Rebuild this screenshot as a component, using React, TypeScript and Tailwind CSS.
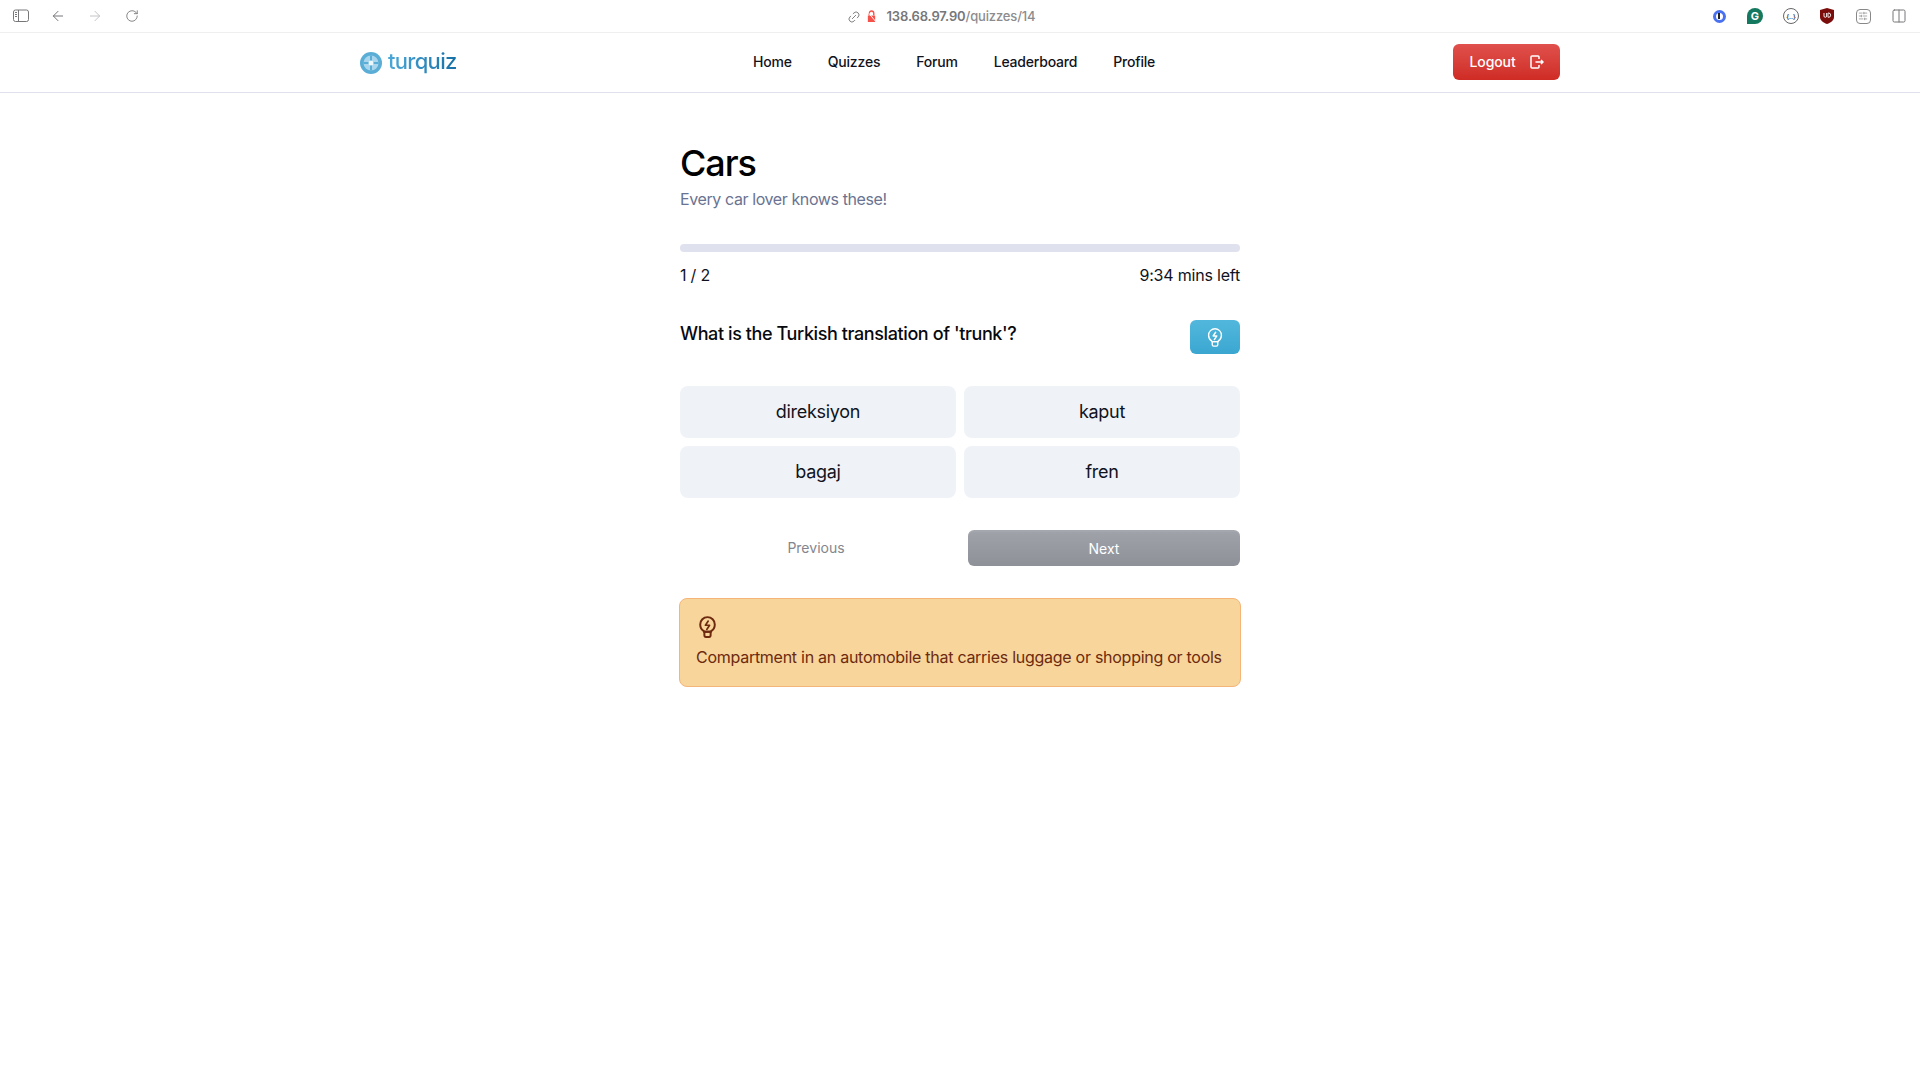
import { ArrowLeft, ArrowRight, Columns2, Link2, RotateCw, SlidersHorizontal } from "lucide-react";

function BulbIcon({ className }: { className: string }) {
  return (
    <svg viewBox="0 0 24 24" fill="none" stroke="currentColor" strokeLinecap="round" strokeLinejoin="round" className={className}>
      <path d="M8.500 16.500C6.400 15.100 5 12.800 5 10a7 7 0 0 1 14 0c0 2.800-1.400 5.100-3.500 6.500V17H8.500z" />
      <path d="M9 20.500c0 1 .6 1.500 1.500 1.500h3c.9 0 1.500-.5 1.500-1.500V17H9z" />
      <path d="M12.700 6.800 10 10.800h4l-2.700 4" strokeWidth="1.600" />
    </svg>
  );
}

function Logo() {
  return (
    <svg viewBox="0 0 22 22" className="w-[22px] h-[22px]">
      <circle cx="11" cy="11" r="11" fill="#5aaed6" />
      <circle cx="11" cy="11" r="7.500" fill="#a9d6ec" />
      <path d="M3.500 11h15M11 3.500v15" stroke="#5aaed6" strokeWidth="2" />
      <circle cx="11" cy="11" r="2.500" fill="#eef7fb" />
    </svg>
  );
}

function BrowserBar() {
  return (
    <div className="h-[33px] border-b border-[#efeff2] flex items-center text-[#77777a]">
      <div className="flex items-center pl-[13px]">
        <svg viewBox="0 0 16 14" fill="none" stroke="currentColor" strokeWidth="1" className="w-[16px] h-[14px]">
          <rect x="0.500" y="1" width="15" height="11.500" rx="2" />
          <path d="M5.500 1v11.500M2 3.500h2M2 5.500h2M2 7.500h2" />
        </svg>
        <ArrowLeft className="w-[16px] h-[16px] ml-[21px]" strokeWidth={1.5} />
        <ArrowRight className="w-[16px] h-[16px] ml-[21px] text-[#c4c4c7]" strokeWidth={1.5} />
        <RotateCw className="w-[14px] h-[14px] ml-[22px]" strokeWidth={1.5} />
      </div>
      <div className="flex-1 flex items-center justify-center pl-[42px] text-[13px] tracking-[-0.15px] font-medium pt-[1px]">
        <Link2 className="w-[14px] h-[14px] -rotate-45 mr-[5px]" strokeWidth={1.5} />
        <svg viewBox="0 0 12 14" className="w-[11px] h-[13px] mr-[10px]">
          <path d="M2 6h8v7H2z" fill="#f4524a" />
          <path d="M3.500 6V3.500a2.500 2.500 0 0 1 5 0V6" fill="none" stroke="#f4524a" strokeWidth="1.500" />
          <path d="M1 1l10 12" stroke="#fff" strokeWidth="1" />
        </svg>
        <span className="font-semibold">138.68.97.90</span>
        <span className="text-[#8c8c8f]">/quizzes/14</span>
      </div>
      <div className="flex items-center pr-[3px]">
        <div className="w-[36px] flex justify-center">
          <div className="w-[13px] h-[13px] rounded-full border-[3px] border-[#4a72f0] flex items-center justify-center">
            <div className="w-[2px] h-[6px] bg-[#222]" />
          </div>
        </div>
        <div className="w-[36px] flex justify-center">
          <div className="w-[16px] h-[16px] rounded-full rounded-bl-none bg-[#15795f] flex items-center justify-center text-white text-[11px] font-bold">G</div>
        </div>
        <div className="w-[36px] flex justify-center">
          <div className="w-[16px] h-[16px] rounded-full border border-[#666] flex items-center justify-center text-[6px] text-[#444] font-bold">{"{..}"}</div>
        </div>
        <div className="w-[36px] flex justify-center">
          <svg viewBox="0 0 14 16" className="w-[14px] h-[16px]">
            <path d="M7 0l7 2v7c0 3.500-3 5.500-7 7-4-1.500-7-3.500-7-7V2z" fill="#7b0c0c" />
            <path d="M4 5v3a1.300 1.300 0 0 0 2.600 0V5M8 5v4.300h.5a2.100 2.100 0 0 0 0-4.300z" fill="none" stroke="#fff" strokeWidth="0.900" />
          </svg>
        </div>
        <div className="w-[36px] flex justify-center">
          <div className="w-[15px] h-[15px] rounded-[4px] border border-[#888] flex items-center justify-center">
            <SlidersHorizontal className="w-[10px] h-[10px]" strokeWidth={1.5} />
          </div>
        </div>
        <div className="w-[36px] flex justify-center">
          <Columns2 className="w-[16px] h-[16px]" strokeWidth={1.5} />
        </div>
      </div>
    </div>
  );
}

function NavBar() {
  return (
    <nav className="h-[60px] border-b border-[#dfe2ee] flex justify-center">
      <div className="w-[1200px] flex items-center">
        <div className="flex items-center gap-[6px] w-[393px]">
          <Logo />
          <span className="text-[22px] font-medium tracking-[-0.7px] bg-gradient-to-r from-[#4aa8d8] to-[#1570a6] bg-clip-text text-transparent leading-none pb-[4px]">
            turquiz
          </span>
        </div>
        <div className="flex items-center gap-[36px] text-[14px] tracking-[-0.2px] font-medium text-[#11131c] pb-[2px]">
          <span>Home</span>
          <span>Quizzes</span>
          <span>Forum</span>
          <span>Leaderboard</span>
          <span>Profile</span>
        </div>
        <button className="ml-auto mb-[1px] pb-[1px] w-[107px] h-[36px] rounded-[6px] bg-gradient-to-b from-[#e0504c] to-[#cf2b24] text-white text-[14px] tracking-[-0.1px] font-medium flex items-center justify-center gap-[14px]">
          Logout
          <svg viewBox="0 0 14 14" fill="none" stroke="currentColor" strokeWidth="1.500" className="w-[14px] h-[14px]">
            <path d="M9 4V2a1 1 0 0 0-1-1H2a1 1 0 0 0-1 1v10a1 1 0 0 0 1 1h6a1 1 0 0 0 1-1v-2M5.500 7H13M11 5l2 2-2 2" />
          </svg>
        </button>
      </div>
    </nav>
  );
}

const options = ["direksiyon", "kaput", "bagaj", "fren"];

export default function App() {
  return (
    <div className="min-h-screen bg-white font-['Inter',sans-serif]">
      <BrowserBar />
      <NavBar />
      <main className="w-[560px] mx-auto pt-[50px]">
        <h1 className="text-[36px] leading-[40px] font-medium tracking-[-1.1px] text-black">Cars</h1>
        <p className="text-[16px] leading-[24px] mt-[4px] tracking-[-0.4px] text-[#6a7391]">Every car lover knows these!</p>
        <div className="h-[8px] rounded-full bg-[#dfe2ee] mt-[33px]" />
        <div className="flex justify-between mt-[11px] text-[16px] leading-[24px] tracking-[-0.2px] text-[#11131c]">
          <span>1 / 2</span>
          <span>9:34 mins left</span>
        </div>
        <div className="flex justify-between items-start mt-[33px]">
          <p className="text-[18px] leading-[28px] font-medium tracking-[-0.4px] text-[#08090f]">What is the Turkish translation of 'trunk'?</p>
          <button className="w-[50px] h-[34px] rounded-[6px] bg-gradient-to-b from-[#52b7dc] to-[#3aa7d1] text-white flex items-center justify-center">
            <BulbIcon className="w-[22px] h-[22px] [stroke-width:1.5]" />
          </button>
        </div>
        <div className="grid grid-cols-2 gap-[8px] mt-[32px]">
          {options.map((option) => (
            <button key={option} className="h-[52px] pb-[2px] rounded-[8px] bg-[#eff2f7] text-[18px] tracking-[-0.3px] text-[#11131c] flex items-center justify-center">
              {option}
            </button>
          ))}
        </div>
        <div className="flex mt-[32px]">
          <button className="w-[272px] h-[36px] pb-[2px] text-[14px] text-[#85858d] flex items-center justify-center">Previous</button>
          <button className="w-[272px] h-[36px] pb-[2px] ml-auto rounded-[6px] border-t-2 border-[#a5a7af] bg-gradient-to-b from-[#a0a2aa] to-[#8f9199] text-[14px] text-white flex items-center justify-center">Next</button>
        </div>
        <div className="mt-[32px] -mx-px rounded-[8px] border border-[#f5b579] bg-[#f7d59b] px-[16px] pt-[15px] pb-[17px] text-[#6d2a0f]">
          <BulbIcon className="w-[25px] h-[25px] -ml-px [stroke-width:1.9]" />
          <p className="text-[16px] leading-[24px] tracking-[-0.27px] mt-[6px] whitespace-nowrap">Compartment in an automobile that carries luggage or shopping or tools</p>
        </div>
      </main>
    </div>
  );
}
